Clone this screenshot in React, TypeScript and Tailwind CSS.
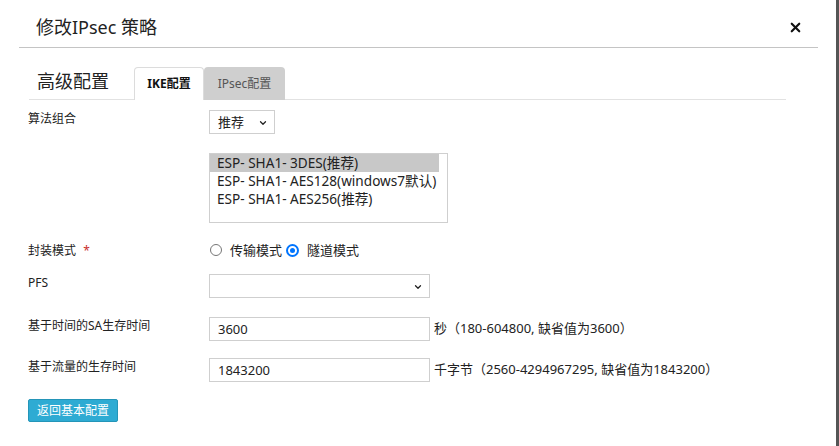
import { X, ChevronDown } from "lucide-react";

const font = { fontFamily: '"Noto Sans", "Noto Sans CJK SC", sans-serif' };

function Select({ value, width }: { value: string; width: string }) {
  return (
    <div className={`relative h-[24px] ${width} border border-[#cfcfcf] bg-white`}>
      <span className="absolute left-[8px] top-[3px] text-[13px] leading-[16px] text-[#222]">{value}</span>
      <ChevronDown className="absolute right-[6px] top-[7px] h-[10px] w-[10px] text-[#222]" strokeWidth={3} />
    </div>
  );
}

function Row({ label, children, className = "" }: { label: React.ReactNode; children: React.ReactNode; className?: string }) {
  return (
    <div className={`flex items-start ${className}`}>
      <div className="w-[181px] shrink-0 pt-[1px] text-[12px] leading-[16px] text-[#222]">{label}</div>
      {children}
    </div>
  );
}

export default function App() {
  return (
    <div className="h-[446px] w-[839px] overflow-hidden border-r-[3px] border-[#555] bg-white text-[#222]" style={font}>
      {/* header */}
      <div className="ml-[19px] mr-[18px] flex h-[48px] items-center justify-between border-b border-[#c4c4c4] pl-[17px] pr-[15px] pt-[7px]">
        <h1 className="text-[18px] leading-[24px] text-[#222]">修改IPsec 策略</h1>
        <X className="h-[15px] w-[15px] text-[#111]" strokeWidth={3.5} />
      </div>

      {/* tabs */}
      <div className="ml-[29px] mt-[19px] flex h-[33px] w-[757px] items-end border-b border-[#e2e2e2]">
        <div className="mb-[6px] w-[105px] pl-[8px] text-[18px] leading-[24px]">高级配置</div>
        <div className="-mb-px flex h-[33px] w-[70px] items-center justify-center rounded-t-[4px] border border-b-0 border-[#dcdcdc] bg-white text-[12px] font-bold text-[#111]">
          IKE配置
        </div>
        <div className="-mb-px flex h-[33px] w-[81px] items-center justify-center rounded-t-[4px] bg-[#cfcfcf] text-[12px] text-[#555]">
          IPsec配置
        </div>
      </div>

      {/* form */}
      <div className="pl-[28px]">
        <Row label="算法组合" className="mt-[10px]">
          <Select value="推荐" width="w-[66px]" />
        </Row>

        <div className="ml-[181px] mt-[19px] h-[70px] w-[239px] border border-[#cfcfcf] bg-white text-[13.6px] leading-[18px]">
          <div className="w-[229px] bg-[#c8c8c8] pl-[7px]">ESP- SHA1- 3DES(推荐)</div>
          <div className="pl-[7px]">ESP- SHA1- AES128(windows7默认)</div>
          <div className="pl-[7px]">ESP- SHA1- AES256(推荐)</div>
        </div>

        <Row
          className="mt-[19px]"
          label={
            <span>
              封装模式 <span className="ml-[4px] text-[#c9302c]">*</span>
            </span>
          }
        >
          <div className="flex items-center text-[13px] leading-[16px]">
            <span className="ml-[1px] h-[12px] w-[12px] rounded-full border border-[#767676] bg-white" />
            <span className="ml-[8px]">传输模式</span>
            <span className="ml-[4px] flex h-[13px] w-[13px] items-center justify-center rounded-full border-2 border-[#0075ff] bg-white">
              <span className="h-[5px] w-[5px] rounded-full bg-[#0075ff]" />
            </span>
            <span className="ml-[8px]">隧道模式</span>
          </div>
        </Row>

        <Row label="PFS" className="mt-[15px]">
          <Select value="" width="w-[221px]" />
        </Row>

        <Row label="基于时间的SA生存时间" className="mt-[19px]">
          <div className="flex items-center">
            <div className="h-[24px] w-[221px] border border-[#cfcfcf] pl-[8px] text-[13px] leading-[22px]">3600</div>
            <span className="ml-[4px] text-[13px]">秒（180-604800, 缺省值为3600）</span>
          </div>
        </Row>

        <Row label="基于流量的生存时间" className="mt-[17px]">
          <div className="flex items-center">
            <div className="h-[24px] w-[221px] border border-[#cfcfcf] pl-[8px] text-[13px] leading-[22px]">1843200</div>
            <span className="ml-[4px] text-[13px]">千字节（2560-4294967295, 缺省值为1843200）</span>
          </div>
        </Row>

        <button className="mt-[17px] flex h-[23px] w-[90px] items-center justify-center rounded-[2px] border border-[#2495b8] bg-[#2eabd3] text-[12px] text-white">
          返回基本配置
        </button>
      </div>
    </div>
  );
}
